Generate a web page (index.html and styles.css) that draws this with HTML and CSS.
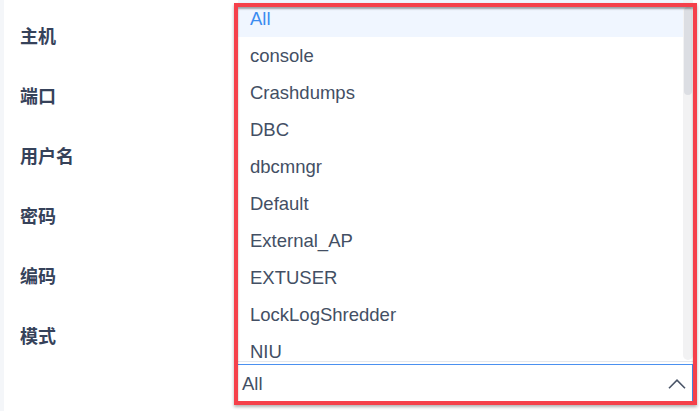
FILE: index.html
```html
<!DOCTYPE html>
<html lang="zh-CN">
<head>
<meta charset="utf-8">
<title>连接设置</title>
<link rel="stylesheet" href="styles.css">
</head>
<body>
<div class="page">
  <div class="rail"></div>
  <div class="labels">
    <div class="label">主机</div>
    <div class="label">端口</div>
    <div class="label">用户名</div>
    <div class="label">密码</div>
    <div class="label">编码</div>
    <div class="label">模式</div>
  </div>
  <div class="field">
    <div class="popup">
      <ul class="options">
        <li class="option selected">All</li>
        <li class="option">console</li>
        <li class="option">Crashdumps</li>
        <li class="option">DBC</li>
        <li class="option">dbcmngr</li>
        <li class="option">Default</li>
        <li class="option">External_AP</li>
        <li class="option">EXTUSER</li>
        <li class="option">LockLogShredder</li>
        <li class="option">NIU</li>
      </ul>
      <div class="scrollbar"><div class="thumb"></div></div>
    </div>
    <div class="select">
      <span class="value">All</span>
      <svg class="chevron" width="18" height="10" viewBox="0 0 18 10"><path d="M1 9.2 L9 1.2 L17 9.2" fill="none" stroke="#4a5568" stroke-width="1.6"/></svg>
    </div>
    <div class="highlight"></div>
  </div>
</div>
</body>
</html>
```
FILE: styles.css
```css
html, body {
  margin: 0;
  padding: 0;
  background: #ffffff;
}
.page {
  display: flex;
  width: 700px;
  height: 411px;
  overflow: hidden;
}
.rail {
  width: 4px;
  background: #f4f6f9;
  flex: none;
}
.labels {
  width: 230px;
  flex: none;
  padding-top: 5px;
  box-sizing: border-box;
  padding-left: 16px;
}
.label {
  height: 60px;
  line-height: 60px;
  font-family: "Noto Sans CJK SC", sans-serif;
  font-weight: bold;
  font-size: 18px;
  color: #36425a;
}
.field {
  position: relative;
  width: 463px;
  flex: none;
  padding: 0 4px;
  box-sizing: border-box;
}
.popup {
  position: relative;
  height: 362px;
  overflow: hidden;
  border-bottom: 1px solid #e4e7ed;
  box-sizing: border-box;
  background: #fff;
}
.options {
  list-style: none;
  margin: 0;
  padding: 0;
}
.option {
  height: 37px;
  line-height: 37px;
  padding-left: 12px;
  font-family: "Liberation Sans", Arial, sans-serif;
  font-size: 18.5px;
  color: #434f64;
}
.option.selected {
  background: #f0f6ff;
  color: #3b8cf0;
}
.scrollbar {
  position: absolute;
  top: 0;
  right: 0;
  width: 10px;
  height: 360px;
  background: #f2f2f3;
  border-radius: 0 0 5px 5px;
}
.thumb {
  margin: 7px 1px 0 1px;
  height: 88px;
  border-radius: 4px;
  background: #dcdee3;
}
.select {
  margin-top: 2px;
  height: 38px;
  border-top: 1px solid #4a90f0;
  border-right: 1px solid #4a90f0;
  box-sizing: border-box;
  display: flex;
  align-items: center;
  justify-content: space-between;
  padding: 0 6px 0 4px;
}
.value {
  font-family: "Liberation Sans", Arial, sans-serif;
  font-size: 18.5px;
  color: #434f64;
}
.chevron {
  display: block;
  margin-top: 1px;
}
.highlight {
  position: absolute;
  left: 0;
  top: 3px;
  width: 463px;
  height: 402px;
  border: 4px solid #f5404a;
  box-sizing: border-box;
  box-shadow: 0 2px 3px rgba(0,0,0,0.3), inset 0 2px 2px rgba(0,0,0,0.35);
  pointer-events: none;
}
```
